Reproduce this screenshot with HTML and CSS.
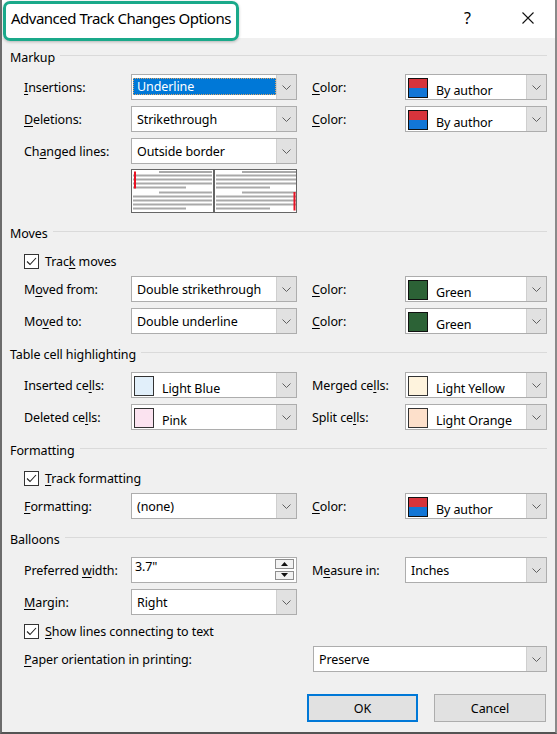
FILE: index.html
```html
<!DOCTYPE html>
<html>
<head>
<meta charset="utf-8">
<link rel="stylesheet" href="styles.css">
</head>
<body>
<div class="window">
  <div class="titlebar">
    <span class="title">Advanced Track Changes Options</span>
    <span class="tb-spacer"></span>
    <span class="help">?</span>
    <span class="close"><svg width="12" height="12" viewBox="0 0 12 12"><path d="M0.5 0.5 L11.5 11.5 M11.5 0.5 L0.5 11.5" stroke="#111" stroke-width="1.1" fill="none"/></svg></span>
    <div class="highlight"></div>
  </div>

  <div class="content">
    <section class="group first">
      <div class="group-head"><span>Markup</span></div>
      <div class="grid markup-grid">
        <label class="lbl"><u>I</u>nsertions:</label>
        <div class="combo"><div class="val"><span class="selected">Underline</span></div><div class="btn"><svg width="9" height="5" viewBox="0 0 9 5"><polyline points="0.5,0.5 4.5,4.5 8.5,0.5" fill="none" stroke="#606060"/></svg></div></div>
        <span></span>
        <label class="lbl"><u>C</u>olor:</label>
        <div class="combo"><div class="val color"><span class="sw author"></span><span class="ctext">By author</span></div><div class="btn"><svg width="9" height="5" viewBox="0 0 9 5"><polyline points="0.5,0.5 4.5,4.5 8.5,0.5" fill="none" stroke="#606060"/></svg></div></div>

        <label class="lbl"><u>D</u>eletions:</label>
        <div class="combo"><div class="val">Strikethrough</div><div class="btn"><svg width="9" height="5" viewBox="0 0 9 5"><polyline points="0.5,0.5 4.5,4.5 8.5,0.5" fill="none" stroke="#606060"/></svg></div></div>
        <span></span>
        <label class="lbl"><u>C</u>olor:</label>
        <div class="combo"><div class="val color"><span class="sw author"></span><span class="ctext">By author</span></div><div class="btn"><svg width="9" height="5" viewBox="0 0 9 5"><polyline points="0.5,0.5 4.5,4.5 8.5,0.5" fill="none" stroke="#606060"/></svg></div></div>

        <label class="lbl">Ch<u>a</u>nged lines:</label>
        <div class="combo"><div class="val">Outside border</div><div class="btn"><svg width="9" height="5" viewBox="0 0 9 5"><polyline points="0.5,0.5 4.5,4.5 8.5,0.5" fill="none" stroke="#606060"/></svg></div></div>
      </div>
      <div class="preview">
        <svg width="166" height="44" viewBox="0 0 166 44">
          <rect x="0.5" y="0.5" width="82" height="43" fill="#fff" stroke="#666"/>
          <rect x="83.5" y="0.5" width="82" height="43" fill="#fff" stroke="#666"/>
          <g fill="#a9a9a9">
            <rect x="28" y="2" width="53" height="2"/>
            <rect x="2" y="5.5" width="79" height="2"/>
            <rect x="2" y="9.5" width="79" height="2"/>
            <rect x="2" y="13.5" width="79" height="2"/>
            <rect x="2" y="17.5" width="53" height="2"/>
            <rect x="28" y="22.5" width="53" height="2"/>
            <rect x="2" y="26.5" width="79" height="2"/>
            <rect x="2" y="30.5" width="79" height="2"/>
            <rect x="2" y="34.5" width="79" height="2"/>
            <rect x="2" y="38.5" width="53" height="2"/>

            <rect x="111" y="2" width="54" height="2"/>
            <rect x="85" y="5.5" width="80" height="2"/>
            <rect x="85" y="9.5" width="80" height="2"/>
            <rect x="85" y="13.5" width="80" height="2"/>
            <rect x="85" y="17.5" width="54" height="2"/>
            <rect x="111" y="22.5" width="54" height="2"/>
            <rect x="85" y="26.5" width="80" height="2"/>
            <rect x="85" y="30.5" width="80" height="2"/>
            <rect x="85" y="34.5" width="80" height="2"/>
            <rect x="85" y="38.5" width="54" height="2"/>
          </g>
          <rect x="3" y="2.5" width="2" height="17" fill="#e81123"/>
          <rect x="162.5" y="23" width="2" height="18.5" fill="#e81123"/>
        </svg>
      </div>
    </section>

    <section class="group">
      <div class="group-head"><span>Moves</span></div>
      <div class="check-row">
        <span class="cb"><svg width="13" height="13" viewBox="0 0 13 13"><polyline points="2,6.5 5,9.5 11,3" fill="none" stroke="#222" stroke-width="1.1"/></svg></span>
        <span>Trac<u>k</u> moves</span>
      </div>
      <div class="grid after-check">
        <label class="lbl">M<u>o</u>ved from:</label>
        <div class="combo"><div class="val">Double strikethrough</div><div class="btn"><svg width="9" height="5" viewBox="0 0 9 5"><polyline points="0.5,0.5 4.5,4.5 8.5,0.5" fill="none" stroke="#606060"/></svg></div></div>
        <span></span>
        <label class="lbl"><u>C</u>olor:</label>
        <div class="combo"><div class="val color"><span class="sw green"></span><span class="ctext">Green</span></div><div class="btn"><svg width="9" height="5" viewBox="0 0 9 5"><polyline points="0.5,0.5 4.5,4.5 8.5,0.5" fill="none" stroke="#606060"/></svg></div></div>

        <label class="lbl">Mo<u>v</u>ed to:</label>
        <div class="combo"><div class="val">Double underline</div><div class="btn"><svg width="9" height="5" viewBox="0 0 9 5"><polyline points="0.5,0.5 4.5,4.5 8.5,0.5" fill="none" stroke="#606060"/></svg></div></div>
        <span></span>
        <label class="lbl"><u>C</u>olor:</label>
        <div class="combo"><div class="val color"><span class="sw green"></span><span class="ctext">Green</span></div><div class="btn"><svg width="9" height="5" viewBox="0 0 9 5"><polyline points="0.5,0.5 4.5,4.5 8.5,0.5" fill="none" stroke="#606060"/></svg></div></div>
      </div>
    </section>

    <section class="group">
      <div class="group-head"><span>Table cell highlighting</span></div>
      <div class="grid after-head">
        <label class="lbl">Inserted ce<u>l</u>ls:</label>
        <div class="combo"><div class="val color"><span class="sw lblue"></span><span class="ctext">Light Blue</span></div><div class="btn"><svg width="9" height="5" viewBox="0 0 9 5"><polyline points="0.5,0.5 4.5,4.5 8.5,0.5" fill="none" stroke="#606060"/></svg></div></div>
        <span></span>
        <label class="lbl">Merged ce<u>l</u>ls:</label>
        <div class="combo"><div class="val color"><span class="sw lyellow"></span><span class="ctext">Light Yellow</span></div><div class="btn"><svg width="9" height="5" viewBox="0 0 9 5"><polyline points="0.5,0.5 4.5,4.5 8.5,0.5" fill="none" stroke="#606060"/></svg></div></div>

        <label class="lbl">Deleted ce<u>l</u>ls:</label>
        <div class="combo"><div class="val color"><span class="sw pink"></span><span class="ctext">Pink</span></div><div class="btn"><svg width="9" height="5" viewBox="0 0 9 5"><polyline points="0.5,0.5 4.5,4.5 8.5,0.5" fill="none" stroke="#606060"/></svg></div></div>
        <span></span>
        <label class="lbl">Split ce<u>l</u>ls:</label>
        <div class="combo"><div class="val color"><span class="sw lorange"></span><span class="ctext">Light Orange</span></div><div class="btn"><svg width="9" height="5" viewBox="0 0 9 5"><polyline points="0.5,0.5 4.5,4.5 8.5,0.5" fill="none" stroke="#606060"/></svg></div></div>
      </div>
    </section>

    <section class="group">
      <div class="group-head"><span>Formatting</span></div>
      <div class="check-row">
        <span class="cb"><svg width="13" height="13" viewBox="0 0 13 13"><polyline points="2,6.5 5,9.5 11,3" fill="none" stroke="#222" stroke-width="1.1"/></svg></span>
        <span><u>T</u>rack formatting</span>
      </div>
      <div class="grid after-check">
        <label class="lbl"><u>F</u>ormatting:</label>
        <div class="combo"><div class="val">(none)</div><div class="btn"><svg width="9" height="5" viewBox="0 0 9 5"><polyline points="0.5,0.5 4.5,4.5 8.5,0.5" fill="none" stroke="#606060"/></svg></div></div>
        <span></span>
        <label class="lbl"><u>C</u>olor:</label>
        <div class="combo"><div class="val color"><span class="sw author"></span><span class="ctext">By author</span></div><div class="btn"><svg width="9" height="5" viewBox="0 0 9 5"><polyline points="0.5,0.5 4.5,4.5 8.5,0.5" fill="none" stroke="#606060"/></svg></div></div>
      </div>
    </section>

    <section class="group">
      <div class="group-head"><span>Balloons</span></div>
      <div class="grid after-head">
        <label class="lbl">Preferred <u>w</u>idth:</label>
        <div class="spin">
          <span class="spin-val">3.7"</span>
          <span class="spin-btns">
            <span class="sbtn"><svg width="7" height="4" viewBox="0 0 7 4"><polygon points="0,4 3.5,0 7,4" fill="#111"/></svg></span>
            <span class="sbtn"><svg width="7" height="4" viewBox="0 0 7 4"><polygon points="0,0 3.5,4 7,0" fill="#111"/></svg></span>
          </span>
        </div>
        <span></span>
        <label class="lbl">M<u>e</u>asure in:</label>
        <div class="combo"><div class="val">Inches</div><div class="btn"><svg width="9" height="5" viewBox="0 0 9 5"><polyline points="0.5,0.5 4.5,4.5 8.5,0.5" fill="none" stroke="#606060"/></svg></div></div>

        <label class="lbl"><u>M</u>argin:</label>
        <div class="combo"><div class="val">Right</div><div class="btn"><svg width="9" height="5" viewBox="0 0 9 5"><polyline points="0.5,0.5 4.5,4.5 8.5,0.5" fill="none" stroke="#606060"/></svg></div></div>
      </div>
      <div class="check-row show-lines">
        <span class="cb"><svg width="13" height="13" viewBox="0 0 13 13"><polyline points="2,6.5 5,9.5 11,3" fill="none" stroke="#222" stroke-width="1.1"/></svg></span>
        <span><u>S</u>how lines connecting to text</span>
      </div>
      <div class="grid paper-row">
        <label class="lbl paper-lbl"><u>P</u>aper orientation in printing:</label>
        <div class="combo paper-combo"><div class="val">Preserve</div><div class="btn"><svg width="9" height="5" viewBox="0 0 9 5"><polyline points="0.5,0.5 4.5,4.5 8.5,0.5" fill="none" stroke="#606060"/></svg></div></div>
      </div>
    </section>

    <div class="buttons">
      <button class="btn-ok">OK</button>
      <button class="btn-cancel">Cancel</button>
    </div>
  </div>
</div>
</body>
</html>
```

FILE: styles.css
```css
* { box-sizing: border-box; }
html, body { margin: 0; padding: 0; }
body {
  width: 557px;
  height: 734px;
  overflow: hidden;
  font-family: "Noto Sans", "Open Sans", sans-serif;
  font-size: 12.5px;
  letter-spacing: -0.1px;
  color: #000;
  background: #f0f0f0;
}
u { text-decoration-thickness: 1px; text-underline-offset: 2px; }

.window {
  position: relative;
  width: 557px;
  height: 734px;
  background: #f0f0f0;
  border-left: 2px solid #6c6c6c;
  border-right: 2px solid #8a8a8a;
  border-bottom: 2px solid #545454;
  display: flex;
  flex-direction: column;
}

.titlebar {
  position: relative;
  height: 38px;
  background: #fff;
  display: flex;
  align-items: center;
  padding-left: 9px;
  padding-bottom: 2px;
}
.title { font-size: 15px; letter-spacing: -0.5px; }
.tb-spacer { flex: 1; }
.help { font-size: 16px; width: 10px; margin-right: 48px; }
.close { width: 12px; height: 12px; margin-right: 21px; display: flex; }
.highlight {
  position: absolute;
  left: 1px;
  top: 1px;
  width: 236px;
  height: 40px;
  border: 3px solid #1aa98a;
  border-radius: 7px;
  box-shadow: 0 1px 3px rgba(0,0,0,0.25);
  pointer-events: none;
}

.content {
  flex: 1;
  display: flex;
  flex-direction: column;
}

.group { margin-top: 11px; }
.group.first { margin-top: 10px; }
.group-head {
  height: 18px;
  display: flex;
  align-items: center;
  padding-left: 8px;
  padding-right: 8px;
}
.group-head::after {
  content: "";
  flex: 1;
  height: 1px;
  background: #dadada;
  margin-left: 5px;
  margin-top: -3px;
}

.grid {
  display: grid;
  grid-template-columns: 107px 166px 15px 93px 142px;
  grid-auto-rows: 26px;
  row-gap: 6px;
  padding-left: 22px;
}
.markup-grid { margin-top: 8px; }
.after-head { margin-top: 9px; }
.after-check { margin-top: 6px; }

.lbl { display: block; line-height: 27px; white-space: nowrap; }

.combo {
  display: flex;
  border: 1px solid #adadad;
  background: #fff;
  height: 26px;
}
.combo .val {
  flex: 1;
  display: flex;
  align-items: center;
  padding-left: 5px;
  white-space: nowrap;
  overflow: hidden;
}
.combo .btn {
  width: 20px;
  background: #e1e1e1;
  border-left: 1px solid #cfcfcf;
  display: flex;
  align-items: center;
  justify-content: center;
}
.selected {
  flex: 1;
  align-self: stretch;
  margin: 3px 0 4px -4px;
  background: #0078d7;
  color: #fff;
  border: 1px dotted #d9a66a;
  display: flex;
  align-items: center;
  padding-left: 3px;
}
.val.color { padding-left: 2px; }
.sw {
  width: 20px;
  height: 20px;
  border: 1px solid #111;
  flex: none;
  margin-right: 8px;
  margin-top: 2px;
}
.sw.author { background: linear-gradient(#d7343c 0 50%, #1276d6 50% 100%); }
.sw.green { background: #2c6236; }
.sw.lblue { background: #e1effa; border-color: #333; }
.sw.pink { background: #fbe3f0; border-color: #333; }
.sw.lyellow { background: #fef3dd; border-color: #333; }
.sw.lorange { background: #fde0cb; border-color: #333; }
.ctext { padding-top: 7px; }

.preview {
  margin-top: 5px;
  padding-left: 129px;
  display: flex;
  height: 44px;
}

.check-row {
  margin-top: 10px;
  height: 18px;
  display: flex;
  align-items: center;
  padding-left: 22px;
}
.cb {
  width: 15px;
  height: 15px;
  border: 1px solid #333;
  background: #fff;
  display: flex;
  align-items: center;
  justify-content: center;
  margin-right: 6px;
}
.show-lines { margin-top: 7px; }

.spin {
  display: flex;
  border: 1px solid #adadad;
  background: #fff;
  height: 26px;
  padding: 1px 1px 2px 0;
}
.spin-val { flex: 1; padding-left: 3px; padding-top: 0; line-height: 16px; }
.spin-btns {
  width: 19px;
  display: flex;
  flex-direction: column;
  gap: 2px;
  margin-right: 1px;
}
.sbtn {
  flex: 1;
  background: #f2f2f2;
  border: 1px solid #8e8e8e;
  display: flex;
  align-items: center;
  justify-content: center;
}

.paper-row { margin-top: 6px; }
.paper-lbl { grid-column: 1 / 4; }
.paper-combo { grid-column: 4 / 6; margin-left: 1px; }

.buttons {
  margin-top: 22px;
  display: flex;
  justify-content: flex-end;
  gap: 16px;
  padding-right: 9px;
}
.buttons button {
  font-family: inherit;
  font-size: 12.5px;
  letter-spacing: -0.1px;
  height: 28px;
  background: #e1e1e1;
  color: #000;
  margin: 0;
  padding: 0;
}
.btn-ok { width: 111px; border: 2px solid #0078d7; }
.btn-cancel { width: 112px; border: 1px solid #adadad; }
```
